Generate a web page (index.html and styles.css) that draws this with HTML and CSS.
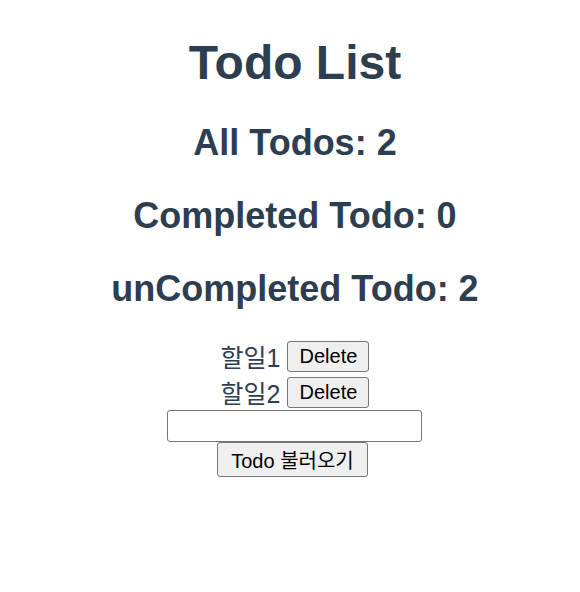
FILE: index.html
```html
<!DOCTYPE html>
<html lang="ko">
<head>
<meta charset="utf-8">
<title>Todo List</title>
<link rel="stylesheet" href="styles.css">
</head>
<body>
<div class="app">
  <h1 class="title">Todo List</h1>
  <h2 class="stat">All Todos: 2</h2>
  <h2 class="stat">Completed Todo: 0</h2>
  <h2 class="stat">unCompleted Todo: 2</h2>
  <div class="list">
    <div class="item"><span class="text">할일1</span> <button class="btn del">Delete</button></div>
    <div class="item"><span class="text">할일2</span> <button class="btn del">Delete</button></div>
  </div>
  <input class="field" type="text">
  <button class="btn load">Todo 불러오기</button>
</div>
</body>
</html>
```

FILE: styles.css
```css
html, body {
  margin: 0;
  padding: 0;
  background: #fff;
}
.app {
  font-family: "Liberation Sans", Arial, "Noto Sans CJK KR", sans-serif;
  color: #2c3e50;
  text-align: center;
  display: flex;
  flex-direction: column;
  align-items: center;
  padding-top: 35px;
  padding-left: 10px;
}
.title {
  font-size: 48px;
  font-weight: bold;
  line-height: 55px;
  margin: 0 0 32px;
}
.stat {
  font-size: 36px;
  font-weight: bold;
  line-height: 41px;
  margin: 0 0 32px;
}
.list {
  margin-top: -3px;
  display: flex;
  flex-direction: column;
  align-items: center;
}
.item {
  height: 36px;
  display: flex;
  align-items: center;
  font-size: 25px;
}
.text {
  font-family: "Liberation Sans", Arial, "Noto Sans CJK KR", sans-serif;
  margin-right: 7px;
}
.btn {
  font-family: "Liberation Sans", Arial, "Noto Sans CJK KR", sans-serif;
  font-size: 20px;
  color: #000;
  background: #efefef;
  border: 1px solid #767676;
  border-radius: 3px;
  padding: 0 9px;
  margin: 0;
}
.del {
  height: 31px;
  width: 82px;
}
.field {
  box-sizing: border-box;
  width: 255px;
  height: 32px;
  margin: 0 2px 0 0;
  border: 1px solid #767676;
  border-radius: 3px;
  padding: 2px 3px;
  font-size: 20px;
  background: #fff;
}
.load {
  height: 35px;
  width: 151px;
  margin-right: 5px;
}
```
